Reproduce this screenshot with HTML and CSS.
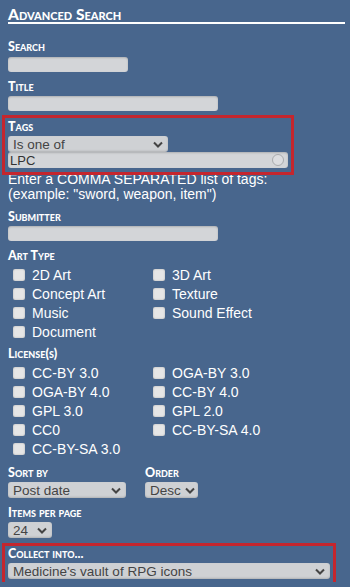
FILE: index.html
```html
<!DOCTYPE html>
<html>
<head>
    <meta charset="utf-8">
    <title>Advanced Search</title>
    <meta name="viewport" content="width=device-width, initial-scale=1.0">
    <link rel="stylesheet" href="styles.css">
</head>
<body>
    <div class="panel">
        <h1>Advanced Search</h1>

        <div class="label first">Search</div>
        <div class="field w-short"></div>

        <div class="label">Title</div>
        <div class="field w-mid"></div>

        <div class="hilite tags">
            <div class="label tight">Tags</div>
            <div class="select w-tagop"><span>Is one of</span>
                <svg class="chev" width="10" height="7" viewBox="0 0 10 7"><path d="M1 1.5 L5 5.5 L9 1.5" fill="none" stroke="#444" stroke-width="2"/></svg>
            </div>
            <div class="field w-tags text"><span>LPC</span>
                <svg class="clear" width="14" height="14" viewBox="0 0 14 14"><circle cx="7" cy="7" r="5.5" fill="#dcdde0" stroke="#a9abae" stroke-width="1"/></svg>
            </div>
        </div>
        <div class="help">Enter a COMMA SEPARATED list of tags:<br>(example: "sword, weapon, item")</div>

        <div class="label">Submitter</div>
        <div class="field w-mid"></div>

        <div class="label">Art Type</div>
        <div class="checks">
            <label><input type="checkbox"> 2D Art</label>
            <label><input type="checkbox"> 3D Art</label>
            <label><input type="checkbox"> Concept Art</label>
            <label><input type="checkbox"> Texture</label>
            <label><input type="checkbox"> Music</label>
            <label><input type="checkbox"> Sound Effect</label>
            <label><input type="checkbox"> Document</label>
        </div>

        <div class="label lic">License(s)</div>
        <div class="checks">
            <label><input type="checkbox"> CC-BY 3.0</label>
            <label><input type="checkbox"> OGA-BY 3.0</label>
            <label><input type="checkbox"> OGA-BY 4.0</label>
            <label><input type="checkbox"> CC-BY 4.0</label>
            <label><input type="checkbox"> GPL 3.0</label>
            <label><input type="checkbox"> GPL 2.0</label>
            <label><input type="checkbox"> CC0</label>
            <label><input type="checkbox"> CC-BY-SA 4.0</label>
            <label><input type="checkbox"> CC-BY-SA 3.0</label>
        </div>

        <div class="sortrow">
            <div class="sortcol">
                <div class="label tight">Sort by</div>
                <div class="select w-sort"><span>Post date</span>
                    <svg class="chev" width="10" height="7" viewBox="0 0 10 7"><path d="M1 1.5 L5 5.5 L9 1.5" fill="none" stroke="#444" stroke-width="2"/></svg>
                </div>
            </div>
            <div>
                <div class="label tight">Order</div>
                <div class="select w-order"><span>Desc</span>
                    <svg class="chev" width="10" height="7" viewBox="0 0 10 7"><path d="M1 1.5 L5 5.5 L9 1.5" fill="none" stroke="#444" stroke-width="2"/></svg>
                </div>
            </div>
        </div>

        <div class="label">Items per page</div>
        <div class="select w-items"><span>24</span>
            <svg class="chev" width="10" height="7" viewBox="0 0 10 7"><path d="M1 1.5 L5 5.5 L9 1.5" fill="none" stroke="#444" stroke-width="2"/></svg>
        </div>

        <div class="hilite collect">
            <div class="label tight">Collect into...</div>
            <div class="select w-collect"><span>Medicine's vault of RPG icons</span>
                <svg class="chev" width="10" height="7" viewBox="0 0 10 7"><path d="M1 1.5 L5 5.5 L9 1.5" fill="none" stroke="#444" stroke-width="2"/></svg>
            </div>
        </div>
    </div>
</body>
</html>
```
FILE: styles.css
```css
body {
    margin: 0;
    background: #48668d;
    color: white;
    font-family: "Liberation Sans", Arial, sans-serif;
    font-size: 14px;
}
.panel {
    padding: 6px 5px 0 8px;
}
h1 {
    margin: 0;
    font-family: Lato, sans-serif;
    font-variant: small-caps;
    font-weight: 900;
    font-size: 15.5px;
    line-height: 16px;
    border-bottom: 2px solid white;
}
.label {
    font-family: Lato, sans-serif;
    font-variant: small-caps;
    font-weight: 900;
    font-size: 12.5px;
    line-height: 16px;
    margin-top: 7px;
    margin-bottom: 1px;
}
.label.first {
    margin-top: 15px;
    margin-bottom: 2px;
}
.label.tight {
    margin-top: 0;
}
.label.lic {
    margin-top: 5px;
    margin-bottom: 1px;
}
.field {
    height: 15px;
    background: #d3d5d8;
    border-radius: 3px;
    box-shadow: inset 0 1px 2px rgba(0, 0, 0, 0.18);
}
.field.text {
    display: flex;
    align-items: center;
    justify-content: space-between;
    color: #333;
    font-size: 13px;
    padding: 0 3px 0 2px;
    box-sizing: border-box;
}
.clear {
    display: block;
}
.w-short { width: 120px; }
.w-mid { width: 210px; }
.w-tags { width: 280px; height: 16px; }
.select {
    display: flex;
    align-items: center;
    justify-content: space-between;
    gap: 4px;
    box-sizing: border-box;
    height: 16px;
    padding: 0 5px 0 5px;
    background: #cfd1d4;
    border-radius: 3px;
    box-shadow: inset 0 -1px 2px rgba(0, 0, 0, 0.15);
    color: #444;
    font-size: 13.5px;
    white-space: nowrap;
}
.chev {
    display: block;
    flex-shrink: 0;
}
.w-tagop { width: 160px; }
.w-sort { width: 118px; }
.w-order { width: 53px; padding-right: 4px; }
.w-items { width: 44px; }
.w-collect { width: 322px; }
.hilite {
    outline: 3px solid #c4262e;
    padding: 1px 3px 4px;
    margin-left: -3px;
}
.tags {
    width: 280px;
    margin-top: 7px;
}
.collect {
    width: 322px;
    margin-top: 8px;
    padding-top: 0;
    padding-bottom: 3px;
}
.help {
    line-height: 15px;
    margin-bottom: 0;
}
.checks {
    display: grid;
    grid-template-columns: 140px 1fr;
    grid-auto-rows: 19px;
    padding-left: 5px;
}
.checks label {
    display: flex;
    align-items: center;
    gap: 7px;
}
.checks input {
    appearance: none;
    -webkit-appearance: none;
    margin: 0;
    width: 12px;
    height: 12px;
    background: #e6e6e6;
    border-radius: 2px;
    box-shadow: inset 0 0 2px rgba(0, 0, 0, 0.25);
}
.sortrow {
    display: flex;
    margin-top: 7px;
}
.sortcol {
    width: 137px;
}
```
